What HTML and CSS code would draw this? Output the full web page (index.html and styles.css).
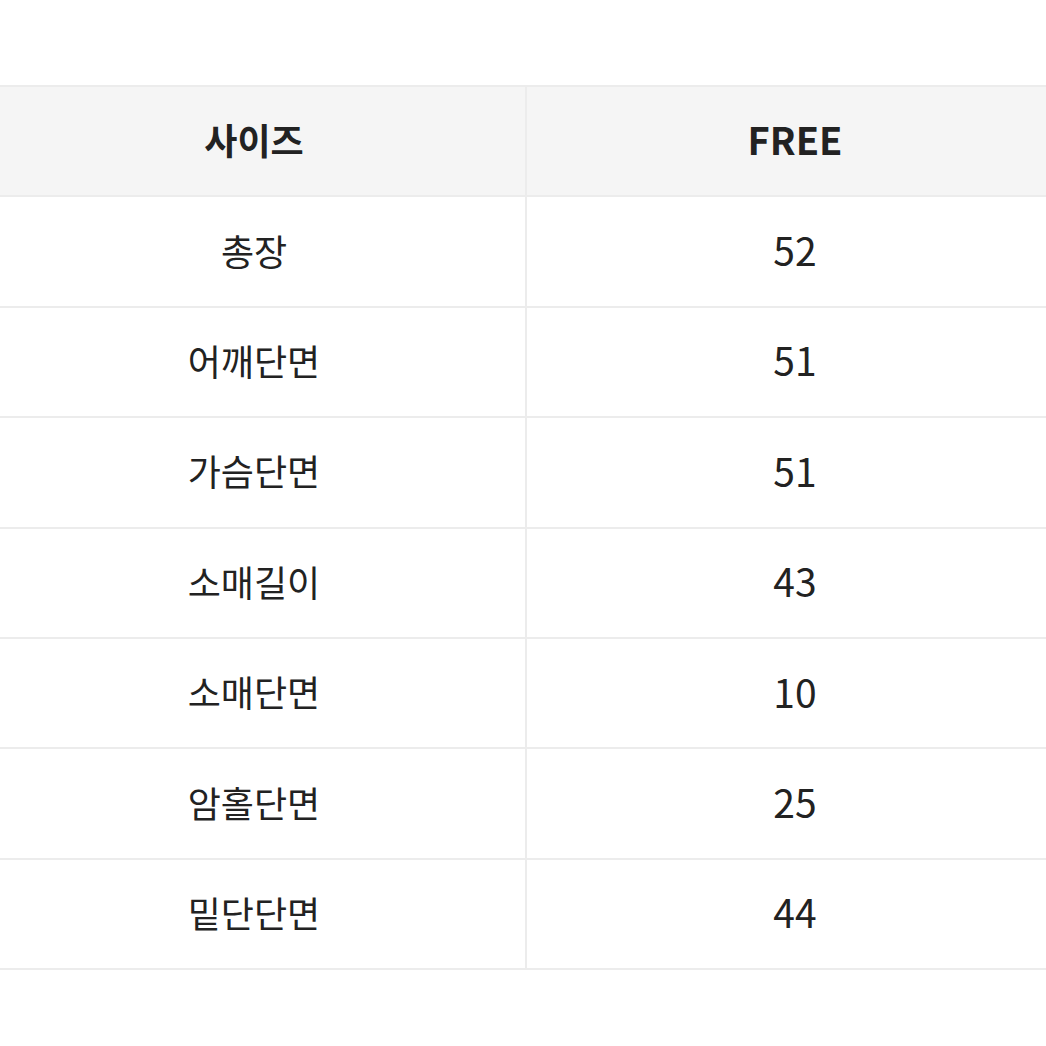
FILE: index.html
```html
<!DOCTYPE html>
<html lang="ko">
<head>
<meta charset="utf-8">
<link rel="stylesheet" href="styles.css">
</head>
<body>
<div class="page">
  <div class="table">
    <div class="row head"><div class="cell">사이즈</div><div class="cell val">FREE</div></div>
    <div class="row"><div class="cell">총장</div><div class="cell val">52</div></div>
    <div class="row"><div class="cell">어깨단면</div><div class="cell val">51</div></div>
    <div class="row"><div class="cell">가슴단면</div><div class="cell val">51</div></div>
    <div class="row"><div class="cell">소매길이</div><div class="cell val">43</div></div>
    <div class="row"><div class="cell">소매단면</div><div class="cell val">10</div></div>
    <div class="row"><div class="cell">암홀단면</div><div class="cell val">25</div></div>
    <div class="row"><div class="cell">밑단단면</div><div class="cell val">44</div></div>
  </div>
</div>
</body>
</html>
```
FILE: styles.css
```css
html, body { margin: 0; padding: 0; background: #fff; overflow: hidden; }
body { font-family: "Noto Sans CJK KR", "Noto Sans", sans-serif; color: #222; }
.page { padding-top: 85px; }
.table {
  border-top: 2px solid #ececec;
  margin-left: -17px;
  width: 1080px;
}
.row {
  display: grid;
  grid-template-columns: 542px 1fr;
  border-bottom: 2px solid #ececec;
  height: 108.4px;
}
.cell {
  display: flex;
  align-items: center;
  justify-content: center;
  font-size: 36px;
  line-height: 1;
  padding-bottom: 4px;
  box-sizing: border-box;
}
.cell + .cell { border-left: 2px solid #ececec; }
.val { font-size: 39px; }
.head { background: #f5f5f5; }
.head .cell { font-weight: 700; }
.head .val { font-size: 38px; }
```
